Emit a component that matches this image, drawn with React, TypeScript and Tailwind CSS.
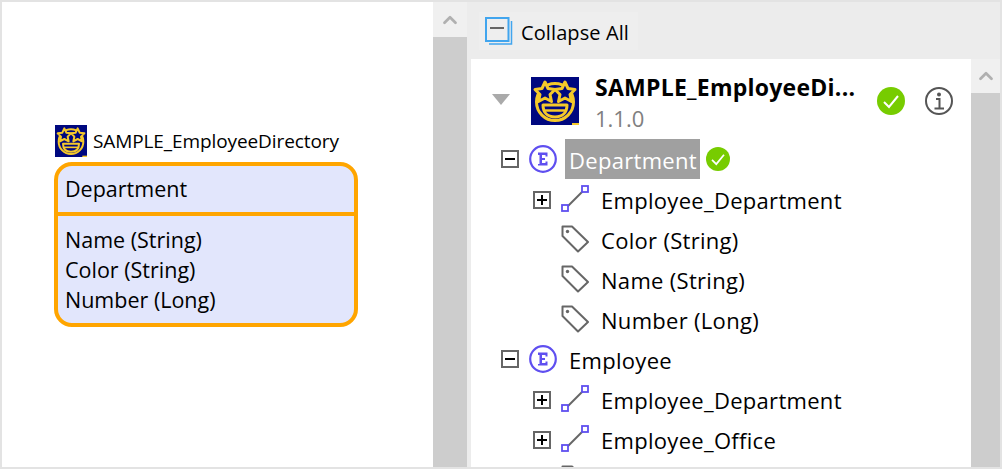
import { ChevronUp } from "lucide-react";

const font = "font-['Open_Sans','Noto_Sans',sans-serif]";

function Logo({ size }: { size: number }) {
  return (
    <svg width={size} height={size} viewBox="0 0 48 48" className="shrink-0">
      <rect width="48" height="48" fill="#00087f" />
      <circle cx="24" cy="25" r="18.5" fill="none" stroke="#f5c92a" strokeWidth="3" />
      <path d="M14 5l3 6.500 7 1-5 5 1.500 7-6.500-3.500-6.500 3.500 1.500-7-5-5 7-1z" fill="#00087f" stroke="#f5c92a" strokeWidth="3" strokeLinejoin="round" />
      <path d="M34 5l3 6.500 7 1-5 5 1.500 7-6.500-3.500-6.500 3.500 1.500-7-5-5 7-1z" fill="#00087f" stroke="#f5c92a" strokeWidth="3" strokeLinejoin="round" />
      <path d="M12 28h24c0 8-5 12-12 12s-12-4-12-12z" fill="none" stroke="#f5c92a" strokeWidth="3" strokeLinejoin="round" />
      <path d="M13 33.500h22" stroke="#f5c92a" strokeWidth="2.500" />
      <rect x="41" y="46" width="7" height="2" fill="#f5c92a" />
    </svg>
  );
}

function ExpandBox({ open }: { open?: boolean }) {
  return (
    <svg width="18" height="18" viewBox="0 0 18 18" className="shrink-0">
      <rect x="1" y="1" width="16" height="16" fill="#fff" stroke="#666" strokeWidth="2" />
      <path d="M4 9h10" stroke="#000" strokeWidth="2" />
      {!open && <path d="M9 4v10" stroke="#000" strokeWidth="2" />}
    </svg>
  );
}

function EntityIcon() {
  return (
    <svg width="28" height="28" viewBox="0 0 28 28" className="shrink-0">
      <circle cx="14" cy="14" r="12.800" fill="#fff" stroke="#5f4ff0" strokeWidth="2.200" />
      <path d="M9 7.500h9.500v4h-2V10H13v3h3v2h-3v3h3.500v-1.500h2v4H9V19h1.500v-9H9z" fill="#5f4ff0" />
    </svg>
  );
}

function RelationIcon() {
  return (
    <svg width="28" height="28" viewBox="0 0 28 28" className="shrink-0">
      <path d="M5 23L23 5" stroke="#666" strokeWidth="2" />
      <rect x="1" y="20" width="6" height="6" fill="#fff" stroke="#5f4ff0" strokeWidth="1.800" />
      <rect x="21" y="1" width="6" height="6" fill="#fff" stroke="#5f4ff0" strokeWidth="1.800" />
    </svg>
  );
}

function TagIcon() {
  return (
    <svg width="28" height="28" viewBox="0 0 28 28" className="shrink-0">
      <path d="M1.500 1.500h9.500l16 15.500-10 9.500L1.500 11z" fill="none" stroke="#666" strokeWidth="2" strokeLinejoin="round" />
      <circle cx="6.500" cy="6.500" r="1.700" fill="#666" />
    </svg>
  );
}

function CheckBadge({ size }: { size: number }) {
  return (
    <svg width={size} height={size} viewBox="0 0 28 28" className="shrink-0">
      <circle cx="14" cy="14" r="14" fill="#77cc00" />
      <path d="M7 15l5 5 9-11" fill="none" stroke="#fff" strokeWidth="2" />
    </svg>
  );
}

function TreeChild({ label, kind }: { label: string; kind: "relation" | "attribute" }) {
  return (
    <div className="flex h-10 items-center">
      <div className="flex w-7 shrink-0 items-center pt-[2px]">
        {kind === "relation" && <ExpandBox />}
      </div>
      {kind === "relation" ? <RelationIcon /> : <TagIcon />}
      <span className="ml-3 whitespace-nowrap pt-[2px]">{label}</span>
    </div>
  );
}

function TreeEntity({ name, selected }: { name: string; selected?: boolean }) {
  return (
    <div className="flex h-10 items-center">
      <ExpandBox open />
      <div className="ml-[10px]">
        <EntityIcon />
      </div>
      <span className={selected ? "ml-2 flex h-10 items-center bg-[#a0a0a0] pl-1 pr-[3px] pt-[2px] text-white" : "ml-3 pt-[2px]"}>
        {name}
      </span>
      {selected && (
        <div className="ml-[6px]">
          <CheckBadge size={24} />
        </div>
      )}
    </div>
  );
}

export default function App() {
  return (
    <div className={`${font} flex h-[469px] w-[1002px] overflow-hidden border-2 border-[#e3e3e3] bg-white text-black`}>
      {/* diagram panel */}
      <div className="flex w-[431px] shrink-0 flex-col pl-[52px] pt-[123px]">
        <div className="ml-px flex items-center gap-[6px] text-[19px] leading-8 tracking-[-0.1px]">
          <Logo size={32} />
          <span>SAMPLE_EmployeeDirectory</span>
        </div>
        <div className="mt-[5px] w-[304px] rounded-[18px] border-4 border-[#ffa500] bg-[#e2e6fc] text-[21.500px]">
          <div className="flex h-[50px] items-center border-b-4 border-[#ffa500] pl-[7px]">Department</div>
          <div className="flex flex-col pb-2 pl-[7px] pt-[9px] leading-[30px]">
            <span>Name (String)</span>
            <span>Color (String)</span>
            <span>Number (Long)</span>
          </div>
        </div>
      </div>

      {/* left scrollbar */}
      <div className="flex w-[34px] shrink-0 flex-col bg-[#cdcdcd]">
        <div className="flex h-[35px] items-center justify-center bg-[#f0f0f0] text-[#b0b0b0]">
          <ChevronUp size={22} strokeWidth={3} />
        </div>
      </div>

      {/* tree panel */}
      <div className="flex min-w-0 flex-1 flex-col bg-[#ececec]">
        <div className="flex h-[57px] shrink-0 items-start pl-3 pt-[10px]">
          <div className="flex h-[38px] w-[159px] items-center bg-[#eeeeee] pl-[6px]">
            <svg width="28" height="28" viewBox="0 0 28 28" className="shrink-0">
              <path d="M26.500 4v23H4" fill="none" stroke="#41a5ee" strokeWidth="1.500" />
              <rect x="1" y="1" width="22.500" height="23" fill="none" stroke="#41a5ee" strokeWidth="2" />
              <path d="M5 11h14" stroke="#666" strokeWidth="2" />
            </svg>
            <span className="ml-2 whitespace-nowrap pt-[3px] text-[20px] tracking-[0.1px]">Collapse All</span>
          </div>
        </div>
        <div className="flex min-h-0 flex-1 pl-1">
          <div className="min-w-0 flex-1 overflow-hidden bg-white pl-[21px] text-[22px] tracking-[0.3px]">
            <div className="flex h-20 items-start pt-[18px]">
              <svg width="18" height="12" viewBox="0 0 18 12" className="mt-[17px] shrink-0">
                <path d="M0 0h18L9 11z" fill="#aaa" />
              </svg>
              <div className="ml-[21px]">
                <Logo size={48} />
              </div>
              <div className="-mt-[5px] ml-4 flex w-[259px] flex-col leading-[31px] tracking-normal">
                <span className="whitespace-nowrap text-[23px] font-bold tracking-[0.25px]">SAMPLE_EmployeeDi...</span>
                <span className="text-[#808080]">1.1.0</span>
              </div>
              <div className="ml-[23px] mt-[10px] flex items-center gap-5">
                <CheckBadge size={28} />
                <svg width="28" height="28" viewBox="0 0 28 28" className="shrink-0">
                  <circle cx="14" cy="14" r="13" fill="none" stroke="#555" strokeWidth="2" />
                  <circle cx="14" cy="7.500" r="2" fill="#555" />
                  <path d="M11 12h3.500v9M9.500 21.500h9.500" fill="none" stroke="#555" strokeWidth="2" />
                </svg>
              </div>
            </div>
            <div className="pl-[9px]">
              <TreeEntity name="Department" selected />
              <div className="pl-8">
                <TreeChild kind="relation" label="Employee_Department" />
                <TreeChild kind="attribute" label="Color (String)" />
                <TreeChild kind="attribute" label="Name (String)" />
                <TreeChild kind="attribute" label="Number (Long)" />
              </div>
              <TreeEntity name="Employee" />
              <div className="pl-8">
                <TreeChild kind="relation" label="Employee_Department" />
                <TreeChild kind="relation" label="Employee_Office" />
                <TreeChild kind="attribute" label="" />
              </div>
            </div>
          </div>
          <div className="flex w-[29px] shrink-0 flex-col bg-[#cdcdcd]">
            <div className="flex h-[34px] items-center justify-center bg-[#f0f0f0] text-[#b0b0b0]">
              <ChevronUp size={22} strokeWidth={3} />
            </div>
          </div>
        </div>
      </div>
    </div>
  );
}
